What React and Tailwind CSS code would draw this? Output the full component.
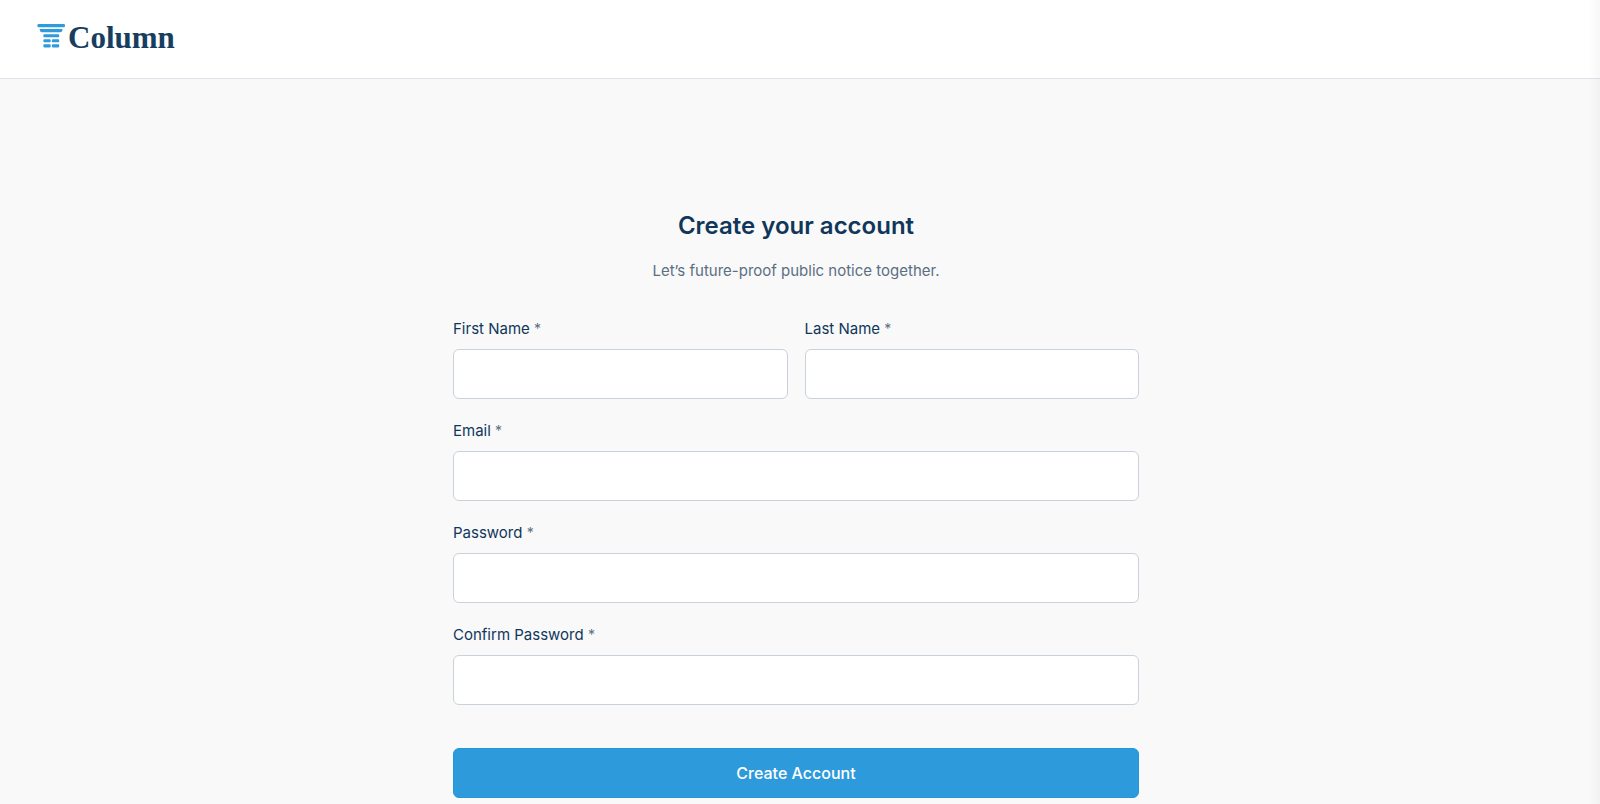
function Logo() {
  return (
    <a href="/" className="flex items-start gap-[3px]">
      <svg viewBox="0 0 28 24" className="h-6 w-7 text-[#2f9bdc]" fill="currentColor" aria-hidden="true">
        <rect x="0.400" y="0" width="27.600" height="3.200" rx="1.300" />
        <path d="M2.800 5H25.600Q25.400 8.300 23.200 8.300H5.200Q2.600 8.300 2.800 5Z" />
        <rect x="6.400" y="10.200" width="15.800" height="3" rx="0.800" />
        <rect x="6.400" y="15.200" width="7.300" height="3" rx="0.800" />
        <rect x="14.900" y="15.200" width="7.300" height="3" rx="0.800" />
        <rect x="6.400" y="20.200" width="7.300" height="3.200" rx="0.800" />
        <rect x="14.900" y="20.200" width="7.300" height="3.200" rx="0.800" />
      </svg>
      <span className="font-['Liberation_Serif',serif] text-[31px] leading-7 font-bold text-[#173e5f]">Column</span>
    </a>
  );
}

function Field({ id, label, type = "text" }) {
  return (
    <div className="flex flex-col gap-2">
      <label htmlFor={id} className="text-[15px] leading-6 text-[#10375a]">
        {label} <span className="text-sm leading-none text-[#5b6f83]">*</span>
      </label>
      <input
        id={id}
        name={id}
        type={type}
        className="h-[50px] w-full rounded-md border border-[#c9d2da] bg-white px-4 text-[15px] text-[#10375a] outline-none focus:border-[#2d9adb]"
      />
    </div>
  );
}

export default function App() {
  return (
    <div className="relative flex min-h-screen flex-col bg-[#f9f9f9] font-['Inter',sans-serif]">
      <header className="border-b border-[#dce3eb] bg-white px-[37px] pt-6 pb-[26px]">
        <Logo />
      </header>
      <main className="flex justify-center pt-32 pr-2 pb-1">
        <form className="w-full max-w-[686px]">
          <h1 className="text-center text-2xl leading-[38px] font-semibold text-[#10375a]">Create your account</h1>
          <p className="mt-[14px] text-center text-[15px] leading-6 text-[#5b6f83]">
            Let’s future-proof public notice together.
          </p>
          <div className="mt-[34px] grid grid-cols-2 gap-x-[17px] gap-y-5">
            <Field id="firstName" label="First Name" />
            <Field id="lastName" label="Last Name" />
            <div className="col-span-2">
              <Field id="email" label="Email" type="email" />
            </div>
            <div className="col-span-2">
              <Field id="password" label="Password" type="password" />
            </div>
            <div className="col-span-2">
              <Field id="confirmPassword" label="Confirm Password" type="password" />
            </div>
          </div>
          <button
            type="submit"
            className="mt-[43px] h-[50px] w-full rounded-md border border-[#2496dc] bg-[#2d9adb] text-base font-medium text-white"
          >
            Create Account
          </button>
        </form>
      </main>
      <div className="pointer-events-none absolute inset-y-0 right-0 w-3 bg-linear-to-r from-transparent to-black/3" />
    </div>
  );
}
